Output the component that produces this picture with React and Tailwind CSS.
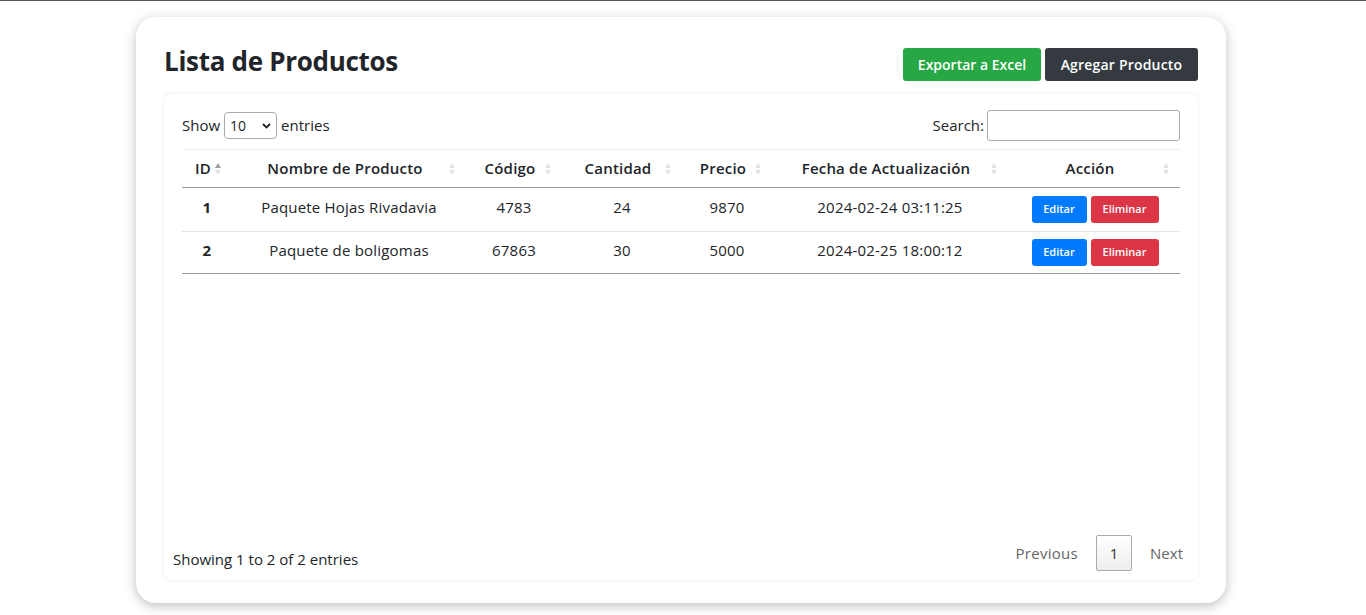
import React from "react";

const font = { fontFamily: '"Open Sans", "Noto Sans", sans-serif' };

function SortIcon({ active }) {
  return (
    <svg width="8" height="14" viewBox="0 0 8 14" className="absolute right-[10px] top-1/2 -translate-y-1/2">
      <path d="M4 1 L7 6 L1 6 Z" fill={active ? "#9aa0a6" : "#e3e3e3"} />
      <path d="M4 13 L7 8 L1 8 Z" fill="#e3e3e3" />
    </svg>
  );
}

const cols = [
  { label: "ID", w: 50, active: true },
  { label: "Nombre de Producto", w: 234 },
  { label: "Código", w: 96 },
  { label: "Cantidad", w: 120 },
  { label: "Precio", w: 90 },
  { label: "Fecha de Actualización", w: 236 },
  { label: "Acción", w: 172 },
];

const rows = [
  ["1", "Paquete Hojas Rivadavia", "4783", "24", "9870", "2024-02-24 03:11:25"],
  ["2", "Paquete de boligomas", "67863", "30", "5000", "2024-02-25 18:00:12"],
];

export default function App() {
  return (
    <div style={font} className="w-[1366px] h-[615px] bg-white border-t border-[#555] overflow-hidden text-[#212529]">
      <div className="mx-[136px] mt-[16px] w-[1090px] h-[586px] bg-white rounded-[20px] shadow-[0_3px_12px_rgba(0,0,0,0.25)] px-[28px] pt-[31px]">
        <div className="flex items-start justify-between">
          <h1 className="text-[26px] font-bold leading-[30px] mt-[-2px] tracking-[-0.3px]">Lista de Productos</h1>
          <div className="flex gap-[4px]">
            <button className="h-[33px] w-[138px] bg-[#28a745] text-white text-[14px] font-semibold rounded-[3px]">Exportar a Excel</button>
            <button className="h-[33px] w-[153px] bg-[#343a40] text-white text-[14px] font-semibold rounded-[3px] tracking-[0.2px]">Agregar Producto</button>
          </div>
        </div>
        <div className="mt-[13px] h-[486px] bg-white rounded-[8px] shadow-[0_0_5px_rgba(0,0,0,0.08)] flex flex-col">
          <div className="px-[18px] pt-[16px]">
            <div className="flex items-center justify-between text-[15px]">
              <div className="flex items-center gap-[4px]">
                <span>Show</span>
                <div className="w-[53px] h-[27px] border border-[#aaa] rounded-[4px] flex items-center justify-between px-[5px] text-[14px]">
                  <span>10</span>
                  <svg width="9" height="6" viewBox="0 0 9 6"><path d="M1 1 L4.5 4.5 L8 1" stroke="#222" strokeWidth="1.8" fill="none" /></svg>
                </div>
                <span>entries</span>
              </div>
              <div className="flex items-center gap-[3px]">
                <span>Search:</span>
                <div className="w-[193px] h-[31px] border border-[#aaa] rounded-[3px]" />
              </div>
            </div>
            <table className="mt-[8px] w-[998px] table-fixed border-collapse text-[15px] tracking-[0.2px]">
              <colgroup>
                {cols.map((c) => (
                  <col key={c.label} style={{ width: c.w }} />
                ))}
              </colgroup>
              <thead>
                <tr className="border-t border-[#eee] border-b border-b-[#999]">
                  {cols.map((c) => (
                    <th key={c.label} className="relative h-[38px] pl-[10px] pr-[18px] pb-[1px] font-semibold text-center whitespace-nowrap">
                      {c.label}
                      <SortIcon active={c.active} />
                    </th>
                  ))}
                </tr>
              </thead>
              <tbody>
                {rows.map((r, i) => (
                  <tr key={r[0]} className={i === 0 ? "border-b border-[#e5e5e5] h-[44px]" : "border-b border-[#999] h-[42px]"}>
                    <td className="text-center font-bold px-[10px] pb-[4px]">{r[0]}</td>
                    {r.slice(1).map((v, j) => (
                      <td key={j} className="text-center px-[10px] pb-[4px] whitespace-nowrap">{v}</td>
                    ))}
                    <td className="px-[10px]">
                      <div className="flex justify-center gap-[4px] pl-[2px]">
                        <button className="h-[27px] w-[55px] rounded-[3px] bg-[#007bff] text-white text-[11px] font-semibold tracking-normal">Editar</button>
                        <button className="h-[27px] w-[68px] rounded-[3px] bg-[#dc3545] text-white text-[11px] font-semibold tracking-normal">Eliminar</button>
                      </div>
                    </td>
                  </tr>
                ))}
              </tbody>
            </table>
          </div>
          <div className="mt-auto flex items-center justify-between pl-[9px] pr-[15px] pb-[9px] text-[15px]">
            <span className="mt-[12px]">Showing 1 to 2 of 2 entries</span>
            <div className="flex items-center text-[#666]">
              <span className="mr-[18px] tracking-[0.3px]">Previous</span>
              <span className="w-[36px] h-[36px] border border-[#aaa] rounded-[2px] bg-[linear-gradient(#fff,#eee)] flex items-center justify-center text-[#333]">1</span>
              <span className="ml-[18px]">Next</span>
            </div>
          </div>
        </div>
      </div>
    </div>
  );
}
